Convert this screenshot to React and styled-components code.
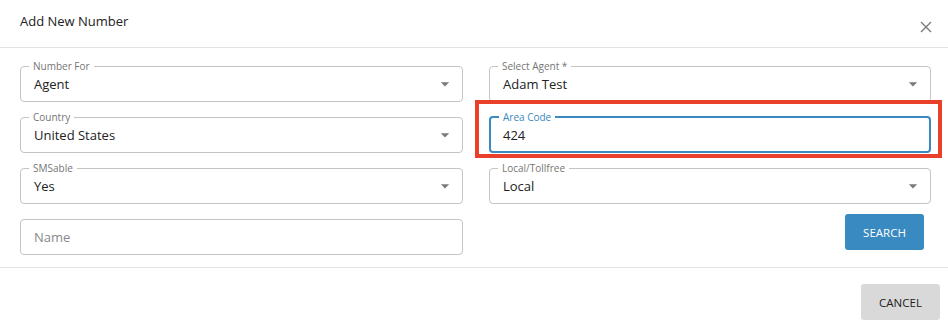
import styled, { createGlobalStyle } from 'styled-components';

const GlobalStyle = createGlobalStyle`
body {
  margin: 0;
  background: #fff;
  font-family: "Open Sans", "Liberation Sans", sans-serif;
  color: #222;
}
`

const Dialog = styled.div`
width: 948px;
height: 330px;
background: #fff;
position: relative;
overflow: hidden;
`

const Header = styled.div`
height: 48px;
box-sizing: border-box;
border-bottom: 1px solid #e2e2e2;
display: flex;
justify-content: space-between;
padding: 12px 16px 0 20px;
`

const Title = styled.h2`
margin: 0;
font-size: 13px;
font-weight: 400;
line-height: 18px;
color: #222;
`

const Close = styled.button`
border: 0;
background: none;
padding: 0;
margin-top: 9px;
width: 12px;
height: 12px;
cursor: pointer;
display: flex;
`

const Body = styled.div`
display: grid;
grid-template-columns: 443px 442px;
column-gap: 26px;
padding: 18px 0 12px 20px;
border-bottom: 1px solid #e2e2e2;
`

const Column = styled.div`
display: flex;
flex-direction: column;
gap: 15px;
`

const Field = styled.div`
position: relative;
height: 36px;
display: flex;
align-items: center;
padding: 0 8px 0 14px;
font-size: 13px;
color: ${props => props.placeholder ? "#8a8a8a" : "#222"};
`

const Value = styled.span`
flex: 1;
`

const Outline = styled.fieldset`
position: absolute;
inset: ${props => props.bare ? "0" : "-5px 0 0 0"};
margin: 0;
padding: 0 8px;
border: ${props => props.focused ? "2px solid #3a89c0" : "1px solid #c4c4c4"};
border-radius: 4px;
pointer-events: none;
`

const Legend = styled.legend`
font-size: 10px;
line-height: 10px;
padding: 0 4px;
color: ${props => props.focused ? "#3a89c0" : "#757575"};
`

const Actions = styled.div`
display: flex;
justify-content: flex-end;
margin-top: -5px;
padding-right: 7px;
`

const Button = styled.button`
width: 79px;
height: 36px;
border: 0;
border-radius: 3px;
font-family: inherit;
font-size: 11.5px;
cursor: pointer;
background: ${props => props.primary ? "#3a8ac2" : "#d9d9d9"};
color: ${props => props.primary ? "#fff" : "#222"};
`

const Footer = styled.div`
display: flex;
justify-content: flex-end;
padding: 16px 8px 0 0;
`

const Highlight = styled.div`
position: absolute;
left: 475px;
top: 100px;
width: 467px;
height: 58px;
box-sizing: border-box;
border: 4px solid #e8402a;
pointer-events: none;
`

const Caret = () => (
    <svg width="20" height="20" viewBox="0 0 24 24" fill="#7a7a7a">
        <path d="M7 10l5 5 5-5z" />
    </svg>
)

const TextField = ({ label, value, select, focused, placeholder }) => (
    <Field placeholder={placeholder}>
        <Value>{value || placeholder}</Value>
        {select && <Caret />}
        <Outline focused={focused} bare={!label}>
            {label && <Legend focused={focused}>{label}</Legend>}
        </Outline>
    </Field>
)

export default function App() {
    return (
        <Dialog>
            <GlobalStyle />
            <Header>
                <Title>Add New Number</Title>
                <Close aria-label="close">
                    <svg width="12" height="12" viewBox="0 0 12 12" stroke="#7a7a7a" strokeWidth="1.4">
                        <path d="M1 1l10 10M11 1L1 11" />
                    </svg>
                </Close>
            </Header>
            <Body>
                <Column>
                    <TextField label="Number For" value="Agent" select />
                    <TextField label="Country" value="United States" select />
                    <TextField label="SMSable" value="Yes" select />
                    <TextField placeholder="Name" />
                </Column>
                <Column>
                    <TextField label="Select Agent *" value="Adam Test" select />
                    <TextField label="Area Code" value="424" focused />
                    <TextField label="Local/Tollfree" value="Local" select />
                    <Actions>
                        <Button primary>SEARCH</Button>
                    </Actions>
                </Column>
            </Body>
            <Footer>
                <Button>CANCEL</Button>
            </Footer>
            <Highlight />
        </Dialog>
    )
}
